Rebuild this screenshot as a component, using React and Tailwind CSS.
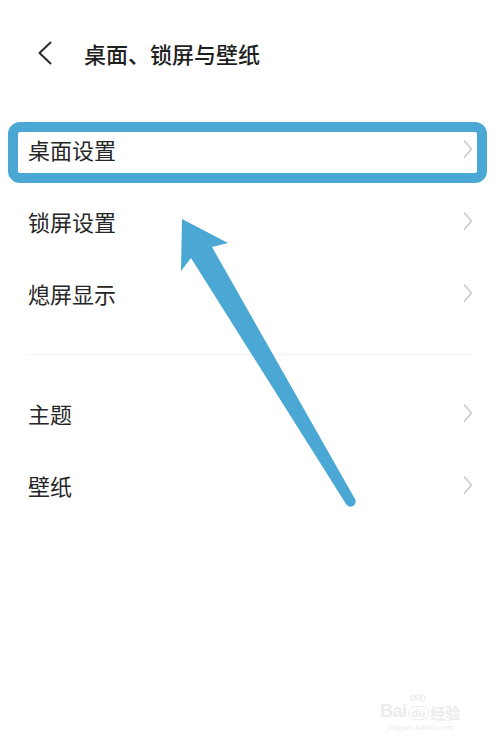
import React from 'react';

const font = { fontFamily: '"Noto Sans CJK SC", "Noto Sans", sans-serif' };

function Chevron() {
    return (
        <svg width="10" height="18" viewBox="0 0 10 18" className="shrink-0">
            <polyline points="1.5,1 8.5,9 1.5,17" fill="none" stroke="#c9c9c9" strokeWidth="1.6" strokeLinecap="round" strokeLinejoin="round" />
        </svg>
    );
}

function Row({ label }) {
    return (
        <div className="h-[72px] flex items-center justify-between pl-[28px] pr-[27px]">
            <span className="text-[22px] leading-none text-[#262626]">{label}</span>
            <Chevron />
        </div>
    );
}

function Watermark() {
    return (
        <div className="absolute left-[380px] top-[694px] flex flex-col items-center text-[#ececec] select-none">
            <div className="flex items-end gap-[1px]">
                <span className="text-[18px] font-bold leading-none tracking-tight" style={{ fontFamily: '"Liberation Sans", sans-serif' }}>Bai</span>
                <div className="relative flex flex-col items-center">
                    <svg width="18" height="11" viewBox="0 0 18 11" className="mb-[1px]">
                        <ellipse cx="4" cy="4" rx="2" ry="2.6" fill="none" stroke="#ececec" strokeWidth="1.2" />
                        <ellipse cx="9" cy="2.8" rx="2" ry="2.4" fill="none" stroke="#ececec" strokeWidth="1.2" />
                        <ellipse cx="14" cy="4" rx="2" ry="2.6" fill="none" stroke="#ececec" strokeWidth="1.2" />
                    </svg>
                    <span className="rounded-full border-[1.5px] border-[#ececec] px-[3px] text-[11px] font-bold leading-[12px]" style={{ fontFamily: '"Liberation Sans", sans-serif' }}>du</span>
                </div>
                <span className="text-[15px] font-bold leading-none">经验</span>
            </div>
            <span className="mt-[3px] text-[9px] leading-none" style={{ fontFamily: '"Liberation Serif", serif' }}>jingyan.baidu.com</span>
        </div>
    );
}

export default function App() {
    return (
        <div className="relative w-[500px] h-[750px] bg-white overflow-hidden" style={font}>
            <header className="h-[105px] flex items-center pl-[38px]">
                <svg width="14" height="24" viewBox="0 0 14 24" className="shrink-0">
                    <polyline points="12.5,1.5 1.5,12 12.5,22.5" fill="none" stroke="#2a2a2a" strokeWidth="2" strokeLinecap="round" strokeLinejoin="round" />
                </svg>
                <h1 className="ml-[32px] text-[22px] font-medium leading-none text-[#1f1f1f]">桌面、锁屏与壁纸</h1>
            </header>

            <div className="pt-[8px]">
                <Row label="桌面设置" />
                <Row label="锁屏设置" />
                <Row label="熄屏显示" />
                <div className="mt-[25px] mx-[27px] h-px bg-[#f3f3f3]" />
                <div className="mt-[22px]">
                    <Row label="主题" />
                    <Row label="壁纸" />
                </div>
            </div>

            {/* annotation overlay */}
            <div className="absolute left-[8px] top-[122px] w-[479px] h-[61px] border-[10px] border-[#4ba7d3] rounded-[12px] pointer-events-none" />
            <svg className="absolute inset-0 pointer-events-none" width="500" height="750" viewBox="0 0 500 750">
                <path
                    d="M182 219 L228 243 L212 247 L355 499 A5 5 0 0 1 346 504 L191 258 L181 271 Z"
                    fill="#4ba7d3"
                />
            </svg>

            <Watermark />
        </div>
    );
}
